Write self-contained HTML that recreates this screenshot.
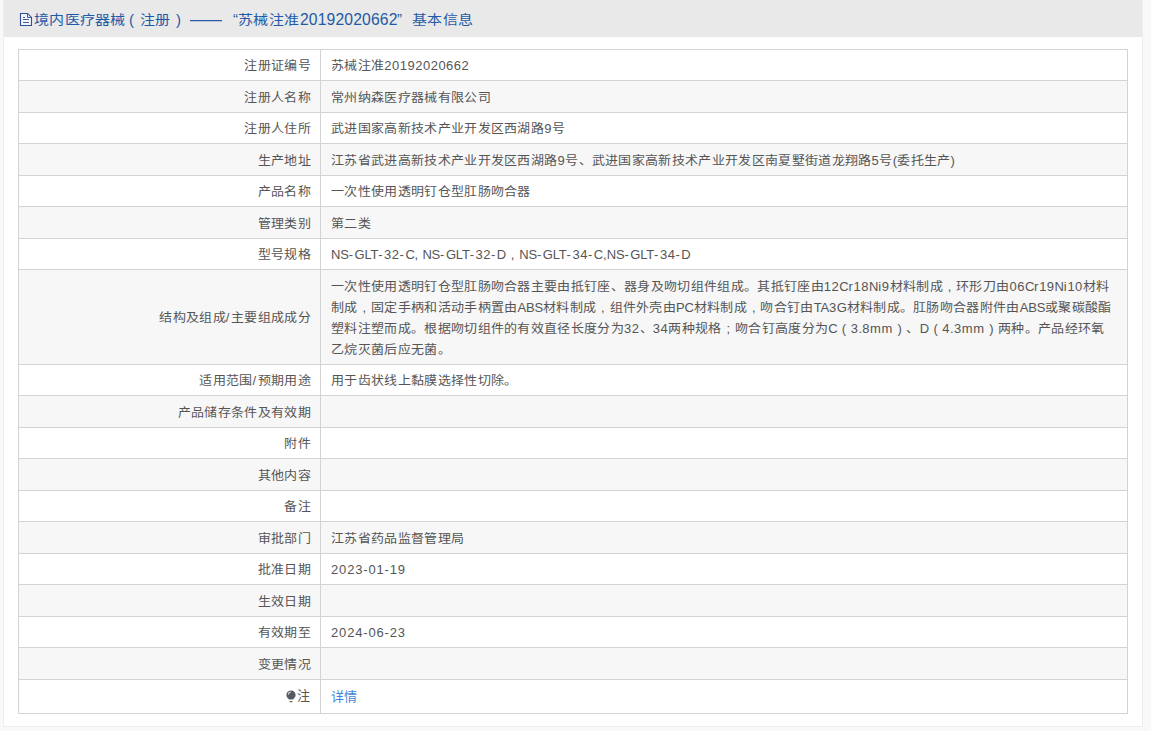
<!DOCTYPE html>
<html lang="zh-CN"><head><meta charset="utf-8">
<style>
html,body{margin:0;padding:0;}
body{width:1151px;height:731px;background:#f9f9f9;position:relative;overflow:hidden;font-family:"Liberation Sans",sans-serif;}
.panel{position:absolute;left:3px;top:-1px;width:1138px;height:726px;border:1px solid #eeeeee;background:#fff;}
.hd{position:absolute;left:0;top:0;width:1138px;height:37px;background:#e9e9e9;}
.ti{position:absolute;top:10px;font-size:15px;line-height:20px;color:#1f5aa6;white-space:nowrap;letter-spacing:0.3px;}
.ico{position:absolute;left:15px;top:13px;}
.tb{position:absolute;left:18px;top:49px;width:1110px;height:665px;background:#d3d3d3;}
.r{position:absolute;left:1px;width:1108px;font-size:13px;color:#555;white-space:nowrap;letter-spacing:0.32px;}
.r .l{position:absolute;left:0;top:0;bottom:0;width:301px;}
.r .v{position:absolute;left:302px;top:0;bottom:0;width:806px;}
.r .l .tx{position:absolute;right:9px;top:0.5px;}
.r .v .tx{position:absolute;left:10px;top:0.5px;}
.o .l,.o .v{background:#fff;}
.e .l,.e .v{background:#f7f7f7;}
.cj{display:inline-block;transform:scaleY(0.92);}
.pn{display:inline-block;width:13.32px;text-align:center;letter-spacing:0;}
.tall{position:absolute;left:10px;top:6px;line-height:21px;}
.lnk{color:#4286d6;}
.bulb{display:inline-block;vertical-align:top;margin-right:0px;margin-top:11px;line-height:0}
</style></head><body>
<div class="panel">
<div class="hd">
<svg class="ico" width="14" height="14" viewBox="0 0 14 14"><path d="M1.5 0.5 H8.5 L12.5 4.5 V12.5 H1.5 Z" fill="#f3f5fb" stroke="#2b4f98" stroke-width="1.1"/><path d="M8.5 1 V4.5 H12" fill="#dfe6f5" stroke="#2b4f98" stroke-width="0.9"/><path d="M4 4.5 H6 M4 6.5 H10 M4 9.5 H10" stroke="#4a5f95" stroke-width="1"/></svg>
</div>
</div>
<div class="ti" style="left:34px;transform:scaleY(0.87)">境内医疗器械</div>
<div class="ti" style="left:129px">(</div>
<div class="ti" style="left:140px;transform:scaleY(0.87)">注册</div>
<div class="ti" style="left:176px">)</div>
<div style="position:absolute;left:190px;top:20px;width:32px;height:1px;background:#2a5ca4"></div><div style="position:absolute;left:190px;top:21px;width:32px;height:1px;background:#2a5ca4;opacity:.25"></div>
<div class="ti" style="left:233px;top:9px">“</div>
<div class="ti" style="left:238px;transform:scaleY(0.87)">苏械注准</div>
<div class="ti" style="left:300px;letter-spacing:0.15px;font-size:15.7px">20192020662</div>
<div class="ti" style="left:397px;top:9px">”</div>
<div class="ti" style="left:412px;transform:scaleY(0.87)">基本信息</div>
<div class="tb">
<div class="r o" style="top:1px;height:30px"><div class="l"><div class="tx" style="line-height:30px;top:0.5px"><span class="cj">注册证编号</span></div></div><div class="v"><div class="tx" style="line-height:30px;top:0.5px"><span class="cj">苏械注准</span><span style="font-size:13px;letter-spacing:0.5px">20192020662</span></div></div></div>
<div class="r e" style="top:32px;height:31px"><div class="l"><div class="tx" style="line-height:31px;top:0.5px"><span class="cj">注册人名称</span></div></div><div class="v"><div class="tx" style="line-height:31px;top:0.5px"><span class="cj">常州纳森医疗器械有限公司</span></div></div></div>
<div class="r o" style="top:64px;height:30px"><div class="l"><div class="tx" style="line-height:30px;top:0.5px"><span class="cj">注册人住所</span></div></div><div class="v"><div class="tx" style="line-height:30px;top:0.5px"><span class="cj">武进国家高新技术产业开发区西湖路</span><span style="font-size:13px;letter-spacing:0.5px">9</span><span class="cj">号</span></div></div></div>
<div class="r e" style="top:95px;height:31px"><div class="l"><div class="tx" style="line-height:31px;top:0.5px"><span class="cj">生产地址</span></div></div><div class="v"><div class="tx" style="line-height:31px;top:0.5px"><span class="cj">江苏省武进高新技术产业开发区西湖路</span><span style="font-size:13px;letter-spacing:0.5px">9</span><span class="cj">号、武进国家高新技术产业开发区南夏墅街道龙翔路</span><span style="font-size:13px;letter-spacing:0.5px">5</span><span class="cj">号</span><span style="font-size:13px;letter-spacing:0.3px">(</span><span class="cj">委托生产</span><span style="font-size:13px;letter-spacing:0.3px">)</span></div></div></div>
<div class="r o" style="top:127px;height:30px"><div class="l"><div class="tx" style="line-height:30px;top:0.5px"><span class="cj">产品名称</span></div></div><div class="v"><div class="tx" style="line-height:30px;top:0.5px"><span class="cj">一次性使用透明钉仓型肛肠吻合器</span></div></div></div>
<div class="r e" style="top:158px;height:31px"><div class="l"><div class="tx" style="line-height:31px;top:0.5px"><span class="cj">管理类别</span></div></div><div class="v"><div class="tx" style="line-height:31px;top:0.5px"><span class="cj">第二类</span></div></div></div>
<div class="r o" style="top:190px;height:30px"><div class="l"><div class="tx" style="line-height:30px;top:0.5px"><span class="cj">型号规格</span></div></div><div class="v"><div class="tx" style="line-height:30px;top:0.5px"><span style="font-size:13px;letter-spacing:-0.2px">NS</span><span style="font-size:13px;letter-spacing:1.5px">-</span><span style="font-size:13px;letter-spacing:-0.2px">GLT</span><span style="font-size:13px;letter-spacing:1.5px">-</span><span style="font-size:13px;letter-spacing:0.5px">32</span><span style="font-size:13px;letter-spacing:1.5px">-</span><span style="font-size:13px;letter-spacing:-0.2px">C</span><span style="font-size:13px;letter-spacing:0.3px">, </span><span style="font-size:13px;letter-spacing:-0.2px">NS</span><span style="font-size:13px;letter-spacing:1.5px">-</span><span style="font-size:13px;letter-spacing:-0.2px">GLT</span><span style="font-size:13px;letter-spacing:1.5px">-</span><span style="font-size:13px;letter-spacing:0.5px">32</span><span style="font-size:13px;letter-spacing:1.5px">-</span><span style="font-size:13px;letter-spacing:-0.2px">D</span><span class="pn">,</span><span style="font-size:13px;letter-spacing:-0.2px">NS</span><span style="font-size:13px;letter-spacing:1.5px">-</span><span style="font-size:13px;letter-spacing:-0.2px">GLT</span><span style="font-size:13px;letter-spacing:1.5px">-</span><span style="font-size:13px;letter-spacing:0.5px">34</span><span style="font-size:13px;letter-spacing:1.5px">-</span><span style="font-size:13px;letter-spacing:-0.2px">C</span><span style="font-size:13px;letter-spacing:0.3px">,</span><span style="font-size:13px;letter-spacing:-0.2px">NS</span><span style="font-size:13px;letter-spacing:1.5px">-</span><span style="font-size:13px;letter-spacing:-0.2px">GLT</span><span style="font-size:13px;letter-spacing:1.5px">-</span><span style="font-size:13px;letter-spacing:0.5px">34</span><span style="font-size:13px;letter-spacing:1.5px">-</span><span style="font-size:13px;letter-spacing:-0.2px">D</span></div></div></div>
<div class="r e" style="top:221px;height:94px"><div class="l"><div class="tx" style="line-height:94px;top:0.5px"><span class="cj">结构及组成</span><span style="font-size:13px;letter-spacing:1.6px">/</span><span class="cj">主要组成成分</span></div></div><div class="v"><div class="tall"><span class="cj">一次性使用透明钉仓型肛肠吻合器主要由抵钉座、器身及吻切组件组成。其抵钉座由</span><span style="font-size:13px;letter-spacing:0.5px">12</span><span style="font-size:13px;letter-spacing:-0.2px">C</span><span style="font-size:13px;letter-spacing:0.7px">r</span><span style="font-size:13px;letter-spacing:0.5px">18</span><span style="font-size:13px;letter-spacing:-0.2px">N</span><span style="font-size:13px;letter-spacing:0.7px">i</span><span style="font-size:13px;letter-spacing:0.5px">9</span><span class="cj">材料制成</span><span class="pn">,</span><span class="cj">环形刀由</span><span style="font-size:13px;letter-spacing:0.5px">06</span><span style="font-size:13px;letter-spacing:-0.2px">C</span><span style="font-size:13px;letter-spacing:0.7px">r</span><span style="font-size:13px;letter-spacing:0.5px">19</span><span style="font-size:13px;letter-spacing:-0.2px">N</span><span style="font-size:13px;letter-spacing:0.7px">i</span><span style="font-size:13px;letter-spacing:0.5px">10</span><span class="cj">材料</span><br><span class="cj">制成</span><span class="pn">,</span><span class="cj">固定手柄和活动手柄置由</span><span style="font-size:13px;letter-spacing:-0.2px">ABS</span><span class="cj">材料制成</span><span class="pn">,</span><span class="cj">组件外壳由</span><span style="font-size:13px;letter-spacing:-0.2px">PC</span><span class="cj">材料制成</span><span class="pn">,</span><span class="cj">吻合钉由</span><span style="font-size:13px;letter-spacing:-0.2px">TA</span><span style="font-size:13px;letter-spacing:0.5px">3</span><span style="font-size:13px;letter-spacing:-0.2px">G</span><span class="cj">材料制成。肛肠吻合器附件由</span><span style="font-size:13px;letter-spacing:-0.2px">ABS</span><span class="cj">或聚碳酸酯</span><br><span class="cj">塑料注塑而成。根据吻切组件的有效直径长度分为</span><span style="font-size:13px;letter-spacing:0.5px">32</span><span class="cj">、</span><span style="font-size:13px;letter-spacing:0.5px">34</span><span class="cj">两种规格</span><span class="pn">;</span><span class="cj">吻合钉高度分为</span><span style="font-size:13px;letter-spacing:-0.2px">C</span><span class="pn">(</span><span style="font-size:13px;letter-spacing:0.5px">3</span><span style="font-size:13px;letter-spacing:0.3px">.</span><span style="font-size:13px;letter-spacing:0.5px">8</span><span style="font-size:13px;letter-spacing:0.7px">mm</span><span class="pn">)</span><span class="cj">、</span><span style="font-size:13px;letter-spacing:-0.2px">D</span><span class="pn">(</span><span style="font-size:13px;letter-spacing:0.5px">4</span><span style="font-size:13px;letter-spacing:0.3px">.</span><span style="font-size:13px;letter-spacing:0.5px">3</span><span style="font-size:13px;letter-spacing:0.7px">mm</span><span class="pn">)</span><span class="cj">两种。产品经环氧</span><br><span class="cj">乙烷灭菌后应无菌。</span></div></div></div>
<div class="r o" style="top:316px;height:30px"><div class="l"><div class="tx" style="line-height:30px;top:0.5px"><span class="cj">适用范围</span><span style="font-size:13px;letter-spacing:1.6px">/</span><span class="cj">预期用途</span></div></div><div class="v"><div class="tx" style="line-height:30px;top:0.5px"><span class="cj">用于齿状线上黏膜选择性切除。</span></div></div></div>
<div class="r e" style="top:347px;height:31px"><div class="l"><div class="tx" style="line-height:31px;top:0.5px"><span class="cj">产品储存条件及有效期</span></div></div><div class="v"><div class="tx" style="line-height:31px;top:0.5px"></div></div></div>
<div class="r o" style="top:379px;height:30px"><div class="l"><div class="tx" style="line-height:30px;top:0.5px"><span class="cj">附件</span></div></div><div class="v"><div class="tx" style="line-height:30px;top:0.5px"></div></div></div>
<div class="r e" style="top:410px;height:31px"><div class="l"><div class="tx" style="line-height:31px;top:0.5px"><span class="cj">其他内容</span></div></div><div class="v"><div class="tx" style="line-height:31px;top:0.5px"></div></div></div>
<div class="r o" style="top:442px;height:30px"><div class="l"><div class="tx" style="line-height:30px;top:0.5px"><span class="cj">备注</span></div></div><div class="v"><div class="tx" style="line-height:30px;top:0.5px"></div></div></div>
<div class="r e" style="top:473px;height:31px"><div class="l"><div class="tx" style="line-height:31px;top:0.5px"><span class="cj">审批部门</span></div></div><div class="v"><div class="tx" style="line-height:31px;top:0.5px"><span class="cj">江苏省药品监督管理局</span></div></div></div>
<div class="r o" style="top:505px;height:30px"><div class="l"><div class="tx" style="line-height:30px;top:0.5px"><span class="cj">批准日期</span></div></div><div class="v"><div class="tx" style="line-height:30px;top:0.5px"><span class="lt" style="font-size:13px;letter-spacing:0.84px">2023-01-19</span></div></div></div>
<div class="r e" style="top:536px;height:31px"><div class="l"><div class="tx" style="line-height:31px;top:0.5px"><span class="cj">生效日期</span></div></div><div class="v"><div class="tx" style="line-height:31px;top:0.5px"></div></div></div>
<div class="r o" style="top:568px;height:30px"><div class="l"><div class="tx" style="line-height:30px;top:0.5px"><span class="cj">有效期至</span></div></div><div class="v"><div class="tx" style="line-height:30px;top:0.5px"><span class="lt" style="font-size:13px;letter-spacing:0.84px">2024-06-23</span></div></div></div>
<div class="r e" style="top:599px;height:31px"><div class="l"><div class="tx" style="line-height:31px;top:0.5px"><span class="cj">变更情况</span></div></div><div class="v"><div class="tx" style="line-height:31px;top:0.5px"></div></div></div>
<div class="r o" style="top:631px;height:33px"><div class="l"><div class="tx" style="line-height:33px;top:-1.5px;right:10px"><span class="bulb"><svg width="11" height="13" viewBox="0 0 11 13"><path d="M5 0.4 A4.6 4.6 0 0 1 9.6 5 C9.6 7 8.2 8.3 7 9.4 L3 9.4 C1.8 8.3 0.4 7 0.4 5 A4.6 4.6 0 0 1 5 0.4 Z" fill="#555a62"/><path d="M2.4 4.6 A2.7 2.7 0 0 1 4.8 2" stroke="#fff" stroke-width="1.1" fill="none" opacity=".85"/><rect x="3.5" y="11" width="3" height="1.2" fill="#666"/></svg></span>注</div></div><div class="v"><div class="tx" style="line-height:33px;top:-0.5px"><span class="lnk">详情</span></div></div></div>
</div>
</body></html>
